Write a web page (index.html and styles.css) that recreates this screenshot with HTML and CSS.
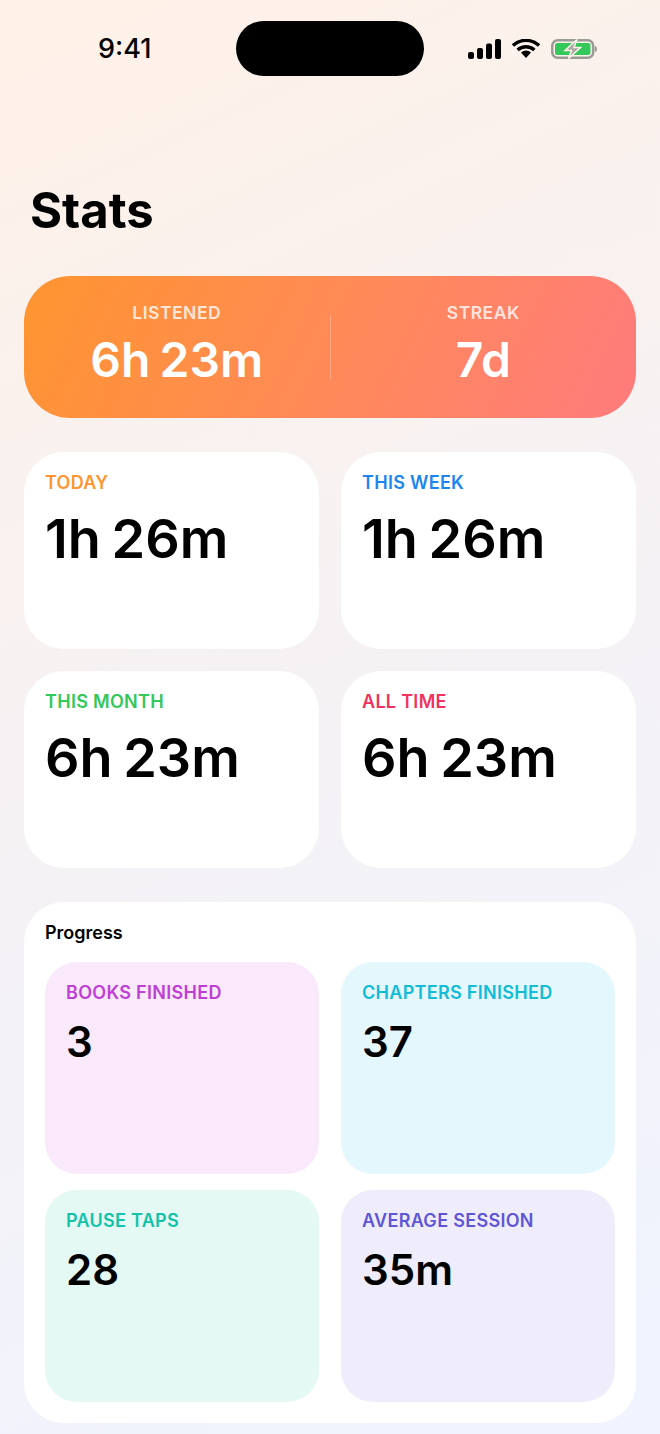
FILE: index.html
```html
<!DOCTYPE html>
<html lang="en">
<head>
  <meta charset="UTF-8" />
  <title>Stats</title>
  <link rel="stylesheet" href="styles.css">
</head>
<body>
  <div class="screen">
    <div class="status-bar">
      <div class="clock">9:41</div>
      <div class="island"></div>
      <div class="status-icons">
        <svg class="signal" width="34" height="20" viewBox="0 0 34 20">
          <rect x="1" y="13" width="6" height="7" rx="2" />
          <rect x="10" y="9" width="6" height="11" rx="2" />
          <rect x="19" y="4.500" width="6" height="15.500" rx="2" />
          <rect x="28" y="0" width="6" height="20" rx="2" />
        </svg>
        <svg class="wifi" width="28" height="20" viewBox="0 0 28 20">
          <path d="M1 6.500 A19 19 0 0 1 27 6.500 M5.600 11 A12.500 12.500 0 0 1 22.400 11" fill="none" stroke="#000" stroke-width="3.400" />
          <path d="M9 13.400 A7.600 7.600 0 0 1 19 13.400 L14 19 Z" fill="#000" />
        </svg>
        <svg class="battery" width="46" height="20" viewBox="0 0 46 20">
          <rect x="1.250" y="1.250" width="41" height="17.500" rx="5.500" fill="none" stroke="#9b9b96" stroke-width="2.500" />
          <rect x="4" y="4" width="35.500" height="12" rx="2.500" fill="#34c759" />
          <path d="M44 7 C45.500 7.500 46 8.500 46 10 C46 11.500 45.500 12.500 44 13 Z" fill="#9b9b96" />
          <path d="M26 0.500 L14 11.500 H20.500 L17.500 19.500 L29.500 8.500 H23 Z" fill="#a9a9a4" stroke="#fff1e7" stroke-width="1.500" />
        </svg>
      </div>
    </div>

    <h1 class="title">Stats</h1>

    <div class="hero">
      <div class="hero-col">
        <div class="hero-label">LISTENED</div>
        <div class="hero-value">6h 23m</div>
      </div>
      <div class="hero-divider"></div>
      <div class="hero-col">
        <div class="hero-label">STREAK</div>
        <div class="hero-value">7d</div>
      </div>
    </div>

    <div class="time-grid">
      <div class="card">
        <div class="label orange">TODAY</div>
        <div class="value">1h 26m</div>
      </div>
      <div class="card">
        <div class="label blue">THIS WEEK</div>
        <div class="value">1h 26m</div>
      </div>
      <div class="card">
        <div class="label green">THIS MONTH</div>
        <div class="value">6h 23m</div>
      </div>
      <div class="card">
        <div class="label red">ALL TIME</div>
        <div class="value">6h 23m</div>
      </div>
    </div>

    <div class="progress">
      <div class="progress-title">Progress</div>
      <div class="progress-grid">
        <div class="tile tile-purple">
          <div class="label purple">BOOKS FINISHED</div>
          <div class="tile-value">3</div>
        </div>
        <div class="tile tile-cyan">
          <div class="label cyan">CHAPTERS FINISHED</div>
          <div class="tile-value">37</div>
        </div>
        <div class="tile tile-mint">
          <div class="label mint">PAUSE TAPS</div>
          <div class="tile-value">28</div>
        </div>
        <div class="tile tile-indigo">
          <div class="label indigo">AVERAGE SESSION</div>
          <div class="tile-value">35m</div>
        </div>
      </div>
    </div>
  </div>
</body>
</html>
```

FILE: styles.css
```css
* {
  box-sizing: border-box;
}

body {
  margin: 0;
  font-family: Inter, 'Noto Sans', sans-serif;
  color: #000;
}

.screen {
  width: 660px;
  height: 1434px;
  padding: 21px 24px 11px;
  overflow: hidden;
  background: linear-gradient(155deg, #fff1e7 0%, #f4f2f6 55%, #f0f4ff 100%);
}

.status-bar {
  display: flex;
  align-items: center;
  height: 55px;
}

.clock {
  width: 212px;
  padding-left: 74px;
  font-size: 27px;
  font-weight: 500;
}

.island {
  width: 188px;
  height: 55px;
  border-radius: 28px;
  background: #000;
}

.status-icons {
  display: flex;
  align-items: center;
  gap: 11px;
  margin-left: 43px;
}

.title {
  margin: 105px 0 0 6px;
  height: 95px;
  font-size: 49px;
  line-height: 60px;
  font-weight: 700;
}

.hero {
  display: flex;
  align-items: center;
  height: 142px;
  border-radius: 46px;
  background: linear-gradient(115deg, #ff9530 0%, #ff8a57 50%, #ff7b7d 100%);
  color: #fff;
}

.hero-col {
  flex: 1;
  text-align: center;
}

.hero-label {
  font-size: 17.500px;
  line-height: 22px;
  font-weight: 600;
  letter-spacing: 0.5px;
  color: rgba(255, 255, 255, 0.8);
  margin-top: -4px;
}

.hero-value {
  margin-top: 8px;
  font-size: 48px;
  line-height: 56px;
  font-weight: 600;
  word-spacing: -3px;
}

.hero-divider {
  width: 1px;
  height: 64px;
  background: rgba(255, 255, 255, 0.25);
}

.time-grid {
  display: grid;
  grid-template-columns: 1fr 1fr;
  gap: 22px;
  margin-top: 34px;
}

.card {
  height: 197px;
  padding: 20px 21px;
  border-radius: 40px;
  background: #fff;
}

.label {
  font-size: 18px;
  line-height: 22px;
  font-weight: 600;
  letter-spacing: 0.3px;
}

.value {
  margin-top: 14px;
  font-size: 54px;
  line-height: 62px;
  font-weight: 600;
  word-spacing: -3px;
}

.orange { color: #ff9530; }
.blue { color: #1c86ee; }
.green { color: #34c759; }
.red { color: #f0325c; }
.purple { color: #bf3fd6; }
.cyan { color: #12bcd8; }
.mint { color: #12c2a9; }
.indigo { color: #5f56d6; }

.progress {
  margin-top: 34px;
  height: 521px;
  padding: 21px;
  border-radius: 40px;
  background: #fff;
}

.progress-title {
  height: 39px;
  font-size: 18px;
  line-height: 20px;
  font-weight: 600;
}

.progress-grid {
  display: grid;
  grid-template-columns: 1fr 1fr;
  column-gap: 22px;
  row-gap: 16px;
}

.tile {
  height: 212px;
  padding: 20px 21px;
  border-radius: 32px;
}

.tile-purple { background: #f9e9fb; }
.tile-cyan { background: #e4f7fc; }
.tile-mint { background: #e4f8f4; }
.tile-indigo { background: #efedfb; }

.tile-value {
  margin-top: 14px;
  font-size: 42px;
  line-height: 48px;
  font-weight: 600;
}
```
